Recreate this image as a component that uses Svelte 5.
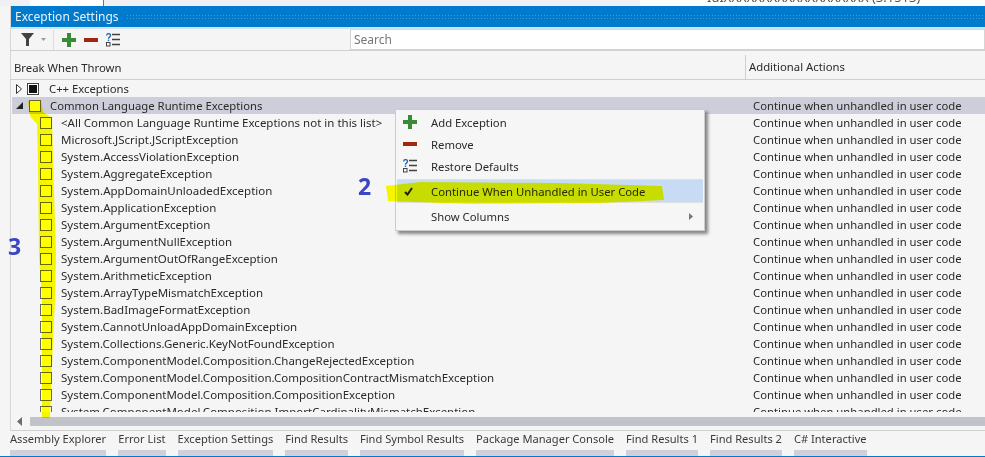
<script>
  const names = [
    '<All Common Language Runtime Exceptions not in this list>',
    'Microsoft.JScript.JScriptException',
    'System.AccessViolationException',
    'System.AggregateException',
    'System.AppDomainUnloadedException',
    'System.ApplicationException',
    'System.ArgumentException',
    'System.ArgumentNullException',
    'System.ArgumentOutOfRangeException',
    'System.ArithmeticException',
    'System.ArrayTypeMismatchException',
    'System.BadImageFormatException',
    'System.CannotUnloadAppDomainException',
    'System.Collections.Generic.KeyNotFoundException',
    'System.ComponentModel.Composition.ChangeRejectedException',
    'System.ComponentModel.Composition.CompositionContractMismatchException',
    'System.ComponentModel.Composition.CompositionException',
    'System.ComponentModel.Composition.ImportCardinalityMismatchException'
  ];
  const tabs = ['Assembly Explorer', 'Error List', 'Exception Settings', 'Find Results', 'Find Symbol Results', 'Package Manager Console', 'Find Results 1', 'Find Results 2', 'C# Interactive'];
  const action = 'Continue when unhandled in user code';
</script>

{#snippet plus()}
  <svg class="ico" viewBox="0 0 14 14"><path d="M5 0h4v5h5v4H9v5H5V9H0V5h5z" fill="#388a34"/></svg>
{/snippet}
{#snippet minus()}
  <svg class="ico" viewBox="0 0 14 14"><rect x="0" y="5" width="14" height="4" fill="#a1260d"/></svg>
{/snippet}
{#snippet restore()}
  <svg class="ico" viewBox="0 0 14 14" fill="none" stroke="#424242"><path d="M6 1.500h8M6 6.500h8M6 11.500h8" stroke-width="1.600"/><rect x="0.500" y="9.500" width="3.500" height="3.500"/><path d="M0.700 2.400c0-2.400 3.800-2.400 3.800 0 0 1.700-2 1.500-2 3.400" stroke="#1b5fb5" stroke-width="1.300"/><path d="M2.500 6.600v1.400" stroke="#1b5fb5" stroke-width="1.300"/></svg>
{/snippet}

<div class="page">
  <div class="topstrip">
    <i class="tabwhite"></i>
    <div class="topright"><span class="toptext">IdIXXXXXXXXXXXXXXXXXXX (3.1513)</span></div>
  </div>
  <section class="panel">
    <header class="title">
      <span>Exception Settings</span>
      <i class="dots"></i>
    </header>
    <div class="toolbar">
      <svg class="funnel" viewBox="0 0 13 13"><path d="M0 0h13L8 6v7H5V6z" fill="#424242"/></svg>
      <svg class="caret" viewBox="0 0 5 3"><path d="M0 0h5L2.500 3z" fill="#9a9a9a"/></svg>
      <i class="tsep"></i>
      <div class="tools">
        {@render plus()}
        {@render minus()}
        {@render restore()}
      </div>
      <div class="search">Search</div>
    </div>
    <div class="head">
      <div class="h1">Break When Thrown</div>
      <div class="h2">Additional Actions</div>
    </div>
    <div class="list">
      <div class="row top">
        <svg class="tw" viewBox="0 0 6 10"><path d="M.5.5l5 4.500-5 4.500z" fill="#fff" stroke="#333"/></svg>
        <span class="box full"><i></i></span>
        <span class="cpp">C++ Exceptions</span>
      </div>
      <div class="row top sel">
        <svg class="tw2" viewBox="0 0 8 8"><path d="M8 0v8H0z" fill="#222"/></svg>
        <span class="box clr"></span>
        <span class="nm">Common Language Runtime Exceptions</span>
        <span class="act">{action}</span>
      </div>
      {#each names as n}
        <div class="row child">
          <span class="box"></span>
          <span class="nm">{n}</span>
          <span class="act">{action}</span>
        </div>
      {/each}
    </div>
    <div class="hscroll">
      <svg class="larrow" viewBox="0 0 5 9"><path d="M5 0v9L0 4.500z" fill="#6d6d6d"/></svg>
      <div class="thumb"></div>
    </div>
  </section>
  <nav class="tabs">
    {#each tabs as t}
      <div class="tab"><span>{t}</span><i></i></div>
    {/each}
  </nav>
  <div class="bluebar"></div>

  <span class="num n2">2</span>
  <span class="num n3">3</span>

  <div class="menu">
    <div class="mi"><span class="mic">{@render plus()}</span><span>Add Exception</span></div>
    <div class="mi"><span class="mic">{@render minus()}</span><span>Remove</span></div>
    <div class="mi"><span class="mic">{@render restore()}</span><span>Restore Defaults</span></div>
    <div class="msep"></div>
    <div class="mi on"><span class="mic"><svg class="chk" viewBox="0 0 9 9"><path d="M1 5l2.500 2.500L8 1" fill="none" stroke="#1e1e1e" stroke-width="2"/></svg></span><span>Continue When Unhandled in User Code</span></div>
    <div class="msep"></div>
    <div class="mi more"><span class="mic"></span><span>Show Columns</span><svg class="sub" viewBox="0 0 4 7"><path d="M0 0l4 3.500L0 7z" fill="#777"/></svg></div>
  </div>

  <svg class="marker" viewBox="0 0 985 457" width="985" height="457">
    <path d="M28 101 L41 100 L43 112 L52 118 L53 160 L56 255 L55 300 L53 340 L50 418 L42 418 L42 300 L39 255 L38 165 L37 124 L30 116 Z" fill="#ffff00"/>
    <path d="M386 186 L420 182 L560 183 L662 186 L664 200 L600 203 L470 204 L388 201 Z" fill="#ffff00"/>
  </svg>
</div>

<style>
  :global(body) { margin: 0; background: #f5f5f5; }
  .page {
    position: relative; width: 985px; height: 457px; overflow: hidden;
    display: flex; flex-direction: column;
    background: #f5f5f5; color: #2a2a2a;
    font: 11.3px/17px "Noto Sans", "Open Sans", sans-serif;
  }
  .topstrip { height: 6px; background: #f0eff4; overflow: hidden; flex: none; display: flex; }
  .tabwhite { width: 73px; margin-left: 30px; background: #fff; border-right: 1px solid #777; }
  .topright { margin-left: auto; width: 345px; background: #fff; overflow: hidden; }
  .toptext { display: block; margin: -11px 0 0 67px; font-size: 13px; color: #555; white-space: nowrap; }
  .panel { flex: none; height: 425px; margin-left: 10px; border-left: 1px solid #d6d6d6; border-bottom: 1px solid #d0d0d0; display: flex; flex-direction: column; box-sizing: border-box; }
  .title { height: 21px; flex: none; background: #007acc; color: #e6f3fb; display: flex; align-items: center; padding-left: 4px; font-size: 12px; }
  .dots { flex: 1; height: 6px; margin: 0 0 0 7px; background-image: radial-gradient(#3f9cd9 .8px, transparent .9px); background-size: 3px 3px; }
  .toolbar { height: 21px; flex: none; display: flex; align-items: center; padding-left: 10px; border-bottom: 1px solid #d0d0d0; border-top: 2px solid #cfe3f2; background: #f5f5f5; }
  .funnel { width: 13px; height: 13px; }
  .caret { width: 5px; height: 3px; margin-left: 7px; }
  .tsep { width: 1px; height: 20px; background: #ddd; margin-left: 7px; }
  .tools { display: flex; gap: 8px; margin-left: 8px; }
  .ico { width: 14px; height: 14px; display: block; }
  .search { margin-left: auto; width: 635px; height: 21px; background: #fff; border: 1px solid #d5d5d5; box-sizing: border-box; padding-left: 3px; color: #777; line-height: 19px; font-size: 12px; }
  .head { height: 24px; margin-top: 4px; flex: none; display: flex; border-bottom: 1px solid #cfcfcf; align-items: center; }
  .h1 { width: 734px; padding-left: 3px; box-sizing: border-box; }
  .h2 { flex: 1; padding-left: 3px; border-left: 1px solid #cfcfcf; height: 100%; line-height: 24px; }
  .list { height: 332px; overflow: hidden; flex: none; }
  .row { height: 17px; position: relative; display: flex; align-items: center; white-space: nowrap; }
  .row.sel { background: #cdced9; margin-left: 1px; }
  .row.child { padding-left: 29px; }
  .tw { width: 6px; height: 10px; margin-left: 5px; }
  .tw2 { width: 7px; height: 7px; margin-left: 4px; }
  .box { width: 12px; height: 12px; box-sizing: border-box; border: 1px solid #666; background: #fff; flex: none; display: flex; align-items: center; justify-content: center; }
  .box.full { margin-left: 5px; border-color: #444; }
  .box.full i { width: 8px; height: 8px; background: #111; }
  .box.clr { margin-left: 6px; }
  .cpp { margin-left: 10px; }
  .row.child .nm { margin-left: 9px; font-size: 11.5px; }
  .row.sel .nm { margin-left: 9px; }
  .act { position: absolute; left: 742px; font-size: 11.3px; }
  .row.sel .act { left: 741px; }
  .hscroll { height: 9px; margin-top: 5px; display: flex; align-items: center; flex: none; }
  .larrow { width: 5px; height: 9px; margin-left: 6px; }
  .thumb { flex: 1; height: 9px; margin-left: 8px; background: #c2c3c9; }
  .tabs { display: flex; gap: 12px; padding-left: 10px; flex: none; }
  .tab { display: flex; flex-direction: column; height: 25px; }
  .tab span { line-height: 16px; padding-bottom: 3px; color: #3a3a3a; white-space: nowrap; font-size: 11.1px; }
  .tab i { height: 6px; background: #cfd0da; }
  .bluebar { height: 1px; background: #007acc; flex: none; }
  .marker { position: absolute; left: 0; top: 0; mix-blend-mode: multiply; pointer-events: none; }
  .num { position: absolute; color: #3b46c4; font: 700 23px/22px "Open Sans", sans-serif; }
  .n2 { left: 358px; top: 175px; }
  .n3 { left: 8px; top: 235px; }
  .menu { position: absolute; left: 395px; top: 109px; width: 310px; height: 122px; box-sizing: border-box; background: #f6f6f6; border: 1px solid #ccc; box-shadow: 3px 3px 3px rgba(0,0,0,.45); padding: 1px 1px; }
  .mi { height: 22px; display: flex; align-items: center; position: relative; }
  .mic { width: 34px; padding-left: 6px; box-sizing: border-box; flex: none; }
  .mi.on { background: #c7dcf4; }
  .msep { height: 1px; background: #e0e0e0; margin: 2px 0 0; }
  .mi.on + .msep { margin: 0; }
  .chk { width: 9px; height: 9px; display: block; margin-left: 1px; }
  .mi.more { height: 27px; }
  .sub { position: absolute; right: 10px; top: 10px; width: 4px; height: 7px; }
</style>
